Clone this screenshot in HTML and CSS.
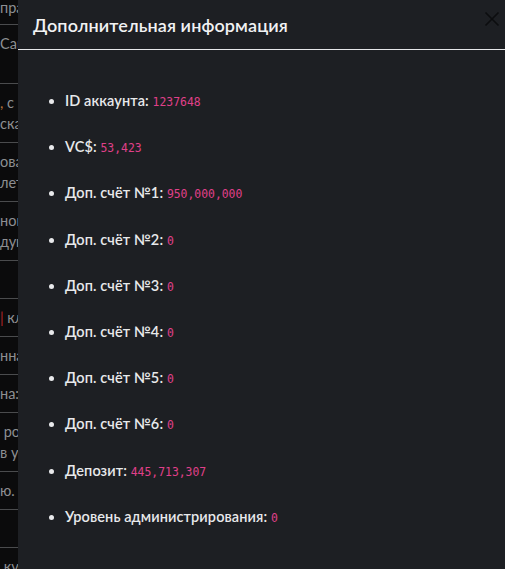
FILE: index.html
```html
<!DOCTYPE html>
<html lang="ru">
<head>
<meta charset="utf-8">
<title>Дополнительная информация</title>
<link rel="stylesheet" href="styles.css">
</head>
<body>
<div class="page">
  <div class="row first"><span>правление</span></div>
  <div class="row two"><span>Car</span><span>&nbsp;</span></div>
  <div class="row two"><span><b class="orange">,</b> с профиля</span><span>ска</span></div>
  <div class="row two"><span>ования</span><span>лет</span></div>
  <div class="row two"><span>новый</span><span>дукция</span></div>
  <div class="row"><span>&nbsp;</span></div>
  <div class="row"><span><b class="red">|</b> клиент</span></div>
  <div class="row"><span>нная</span></div>
  <div class="row"><span>на:</span></div>
  <div class="row two"><span>&nbsp;роз</span><span>в у</span></div>
  <div class="row"><span>ю. <b class="blue">I</b></span></div>
  <div class="row"><span>&nbsp;</span></div>
  <div class="row"><span>&nbsp;ку</span></div>
</div>

<div class="modal">
  <div class="modal-header">
    <h5 class="modal-title">Дополнительная информация</h5>
    <span class="close" aria-label="Закрыть">
      <svg width="16" height="16" viewBox="0 0 16 16"><path d="M1.5 1.5 L14.5 14.5 M14.5 1.5 L1.5 14.5" stroke="#0c0d0f" stroke-width="1.6" fill="none"/></svg>
    </span>
  </div>
  <div class="modal-body">
    <ul class="info">
      <li><b>ID аккаунта:</b> <code>1237648</code></li>
      <li><b>VC$:</b> <code>53,423</code></li>
      <li><b>Доп. счёт №1:</b> <code>950,000,000</code></li>
      <li><b>Доп. счёт №2:</b> <code>0</code></li>
      <li><b>Доп. счёт №3:</b> <code>0</code></li>
      <li><b>Доп. счёт №4:</b> <code>0</code></li>
      <li><b>Доп. счёт №5:</b> <code>0</code></li>
      <li><b>Доп. счёт №6:</b> <code>0</code></li>
      <li><b>Депозит:</b> <code>445,713,307</code></li>
      <li><b>Уровень администрирования:</b> <code>0</code></li>
    </ul>
  </div>
</div>
</body>
</html>
```

FILE: styles.css
```css
html, body {
  margin: 0;
  padding: 0;
  height: 100%;
  overflow: hidden;
}

body {
  background: #0b0b0c;
  font-family: Lato, "Noto Sans", sans-serif;
}

.page {
  margin-top: -3px;
  color: #8d8f92;
  font-size: 14.5px;
  white-space: nowrap;
}

.row {
  display: flex;
  flex-direction: column;
  padding: 8px 0;
  line-height: 21px;
  border-bottom: 1px solid #4a4b4d;
}

.row.first {
  padding: 0 0 6px;
}

.row b {
  font-weight: normal;
}

.orange { color: #b8743a; }
.red { color: #b0262a; }
.blue { color: #4d7fb8; }

.modal {
  position: fixed;
  left: 18px;
  top: 0;
  right: 0;
  bottom: 0;
  background: #1d1f23;
  display: flex;
  flex-direction: column;
}

.modal-header {
  display: flex;
  align-items: center;
  justify-content: space-between;
  height: 49px;
  padding: 0 5px 0 15px;
  border-bottom: 1px solid #e6e7e9;
}

.modal-title {
  margin: 0;
  font-size: 18px;
  font-weight: 600;
  color: #f1f2f3;
  letter-spacing: 0.1px;
}

.close {
  display: flex;
  margin-top: -12px;
}

.modal-body {
  padding: 28px 16px 0;
}

.info {
  margin: 0;
  padding-left: 31px;
  color: #e8e9eb;
  font-size: 14.5px;
}

.info li {
  height: 20.2px;
  line-height: 20px;
  padding: 13px 0;
}

.info b {
  font-weight: 600;
  letter-spacing: 0.1px;
}

.info code {
  font-family: "DejaVu Sans Mono", "Liberation Mono", monospace;
  font-size: 11.4px;
  line-height: 1;
  color: #e0408a;
}
```
